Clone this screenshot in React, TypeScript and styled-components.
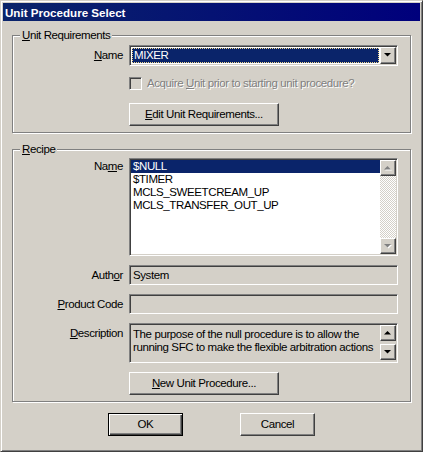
import React from "react";
import styled, { createGlobalStyle, css } from "styled-components";

const GlobalStyle = createGlobalStyle`
  html, body {
    margin: 0;
    padding: 0;
    background: #d4d0c8;
  }
  body {
    font-family: "Liberation Sans", Arial, sans-serif;
    font-size: 11.5px;
    letter-spacing: -0.4px;
    line-height: 13px;
    color: #000;
  }
`;

// win2000 3d borders
const sunken = css`
  box-sizing: border-box;
  border: 1px solid;
  border-color: #808080 #ffffff #ffffff #808080;
  box-shadow: inset 1px 1px 0 #404040, inset -1px -1px 0 #d4d0c8;
  padding: 1px;
`;

const raised = css`
  box-sizing: border-box;
  border: 1px solid;
  border-color: #ffffff #404040 #404040 #ffffff;
  box-shadow: inset -1px -1px 0 #808080, inset 1px 1px 0 #d4d0c8;
  background: #d4d0c8;
`;

const Window = styled.div`
  width: 423px;
  height: 452px;
  box-sizing: border-box;
  border: 1px solid;
  border-color: #d4d0c8 #404040 #404040 #d4d0c8;
  box-shadow: inset 1px 1px 0 #ffffff, inset -1px -1px 0 #808080;
  padding: 2px;
  background: #d4d0c8;
  display: flex;
  flex-direction: column;
`;

const TitleBar = styled.div`
  height: 18px;
  flex: none;
  display: flex;
  align-items: center;
  padding-left: 2px;
  background: linear-gradient(90deg, #0a246a, #00007c);
  color: #fff;
  font: bold 11.6px "Liberation Sans", Arial, sans-serif;
  letter-spacing: 0;
`;

const Body = styled.div`
  display: flex;
  flex-direction: column;
  padding: 0 9px;
`;

const GroupBox = styled.div<{ $top: number; $bottom: number }>`
  margin-top: ${(p) => p.$top}px;
  border: 1px solid #808080;
  box-shadow: inset 1px 1px 0 #ffffff, 1px 1px 0 #ffffff;
  padding: 0 12px ${(p) => p.$bottom}px 1px;
  display: flex;
  flex-direction: column;
`;

const Legend = styled.div`
  align-self: flex-start;
  margin: -7px 0 0 6px;
  padding: 0 2px;
  height: 13px;
  background: #d4d0c8;
`;

const Row = styled.div<{ $gap: number; $align?: string }>`
  display: grid;
  grid-template-columns: 109px 269px;
  column-gap: 6px;
  align-items: ${(p) => p.$align || "center"};
  margin-top: ${(p) => p.$gap}px;
`;

const Label = styled.div<{ $pad?: number }>`
  text-align: right;
  white-space: nowrap;
  padding-top: ${(p) => p.$pad || 0}px;
`;

const Combo = styled.div`
  ${sunken};
  height: 21px;
  background: #fff;
  display: flex;
`;

const ComboValue = styled.div`
  flex: 1;
  margin: 1px;
  padding-left: 1px;
  background: #0a246a;
  color: #fff;
  border: 1px dotted #f0d78c;
  display: flex;
  align-items: center;
`;

const ArrowButton = styled.div<{ $h?: number }>`
  ${raised};
  width: 16px;
  height: ${(p) => p.$h || 16}px;
  flex: none;
  display: flex;
  align-items: center;
  justify-content: center;
`;

const CheckRow = styled.div`
  display: flex;
  align-items: center;
  gap: 5px;
  white-space: nowrap;
`;

const CheckBox = styled.div`
  ${sunken};
  width: 13px;
  height: 13px;
  background: #d4d0c8;
`;

const Disabled = styled.span`
  color: #808080;
  text-shadow: 1px 1px 0 #ffffff;
`;

const Button = styled.button<{ $width: number; $default?: boolean }>`
  ${raised};
  width: ${(p) => p.$width}px;
  height: 23px;
  padding: 0;
  font: inherit;
  letter-spacing: inherit;
  color: #000;
  text-align: center;
  ${(p) =>
    p.$default &&
    css`
      border: 1px solid #000;
      box-shadow: inset 1px 1px 0 #ffffff, inset -1px -1px 0 #404040,
        inset -2px -2px 0 #808080;
    `}
`;

const ListBox = styled.div`
  ${sunken};
  height: 98px;
  background: #fff;
  display: flex;
`;

const ListItems = styled.div`
  flex: 1;
  display: flex;
  flex-direction: column;
`;

const ListItem = styled.div<{ $selected?: boolean }>`
  height: 13px;
  padding-left: 2px;
  white-space: nowrap;
  background: ${(p) => (p.$selected ? "#0a246a" : "transparent")};
  color: ${(p) => (p.$selected ? "#fff" : "#000")};
`;

const ScrollBar = styled.div`
  width: 16px;
  display: flex;
  flex-direction: column;
`;

const Track = styled.div`
  flex: 1;
  background: repeating-conic-gradient(#ffffff 0 25%, #d4d0c8 0 50%) 0 0 / 2px 2px;
`;

const Field = styled.div<{ $h: number }>`
  ${sunken};
  height: ${(p) => p.$h}px;
  background: #d4d0c8;
  padding: 3px 1px 1px 3px;
  white-space: nowrap;
`;

const MemoField = styled(Field)`
  display: flex;
  padding-top: 1px;
`;

const MemoText = styled.div`
  flex: 1;
  padding-top: 3px;
  line-height: 13px;
  overflow: hidden;
`;

const Spin = styled.div`
  display: flex;
  flex-direction: column;
  justify-content: space-between;
  padding-bottom: 1px;
`;

const ButtonBar = styled.div`
  display: flex;
  justify-content: center;
  gap: 57px;
  margin-top: 11px;
`;

const Arrow = ({ up, disabled }: { up?: boolean; disabled?: boolean }) => {
  const d = up ? "M3.5 0 L0 3.5 L7 3.5 Z" : "M0 0 L7 0 L3.5 3.5 Z";
  return (
    <svg width="8" height="5" viewBox="0 0 8 5" style={{ display: "block" }}>
      {disabled && <path d={d} fill="#ffffff" transform="translate(1 1)" />}
      <path d={d} fill={disabled ? "#808080" : "#000000"} />
    </svg>
  );
};

const recipes = ["$NULL", "$TIMER", "MCLS_SWEETCREAM_UP", "MCLS_TRANSFER_OUT_UP"];

const App = () => {
  return (
    <>
      <GlobalStyle />
      <Window>
        <TitleBar>Unit Procedure Select</TitleBar>
        <Body>
          <GroupBox $top={14} $bottom={6}>
            <Legend>
              <u>U</u>nit Requirements
            </Legend>
            <Row $gap={3}>
              <Label>
                <u>N</u>ame
              </Label>
              <Combo>
                <ComboValue>MIXER</ComboValue>
                <ArrowButton $h={17}>
                  <Arrow />
                </ArrowButton>
              </Combo>
            </Row>
            <Row $gap={11}>
              <div />
              <CheckRow>
                <CheckBox />
                <Disabled>
                  Acquire <u>U</u>nit prior to starting unit procedure?
                </Disabled>
              </CheckRow>
            </Row>
            <Row $gap={13}>
              <div />
              <Button $width={150}>
                <u>E</u>dit Unit Requirements...
              </Button>
            </Row>
          </GroupBox>

          <GroupBox $top={16} $bottom={6}>
            <Legend>
              <u>R</u>ecipe
            </Legend>
            <Row $gap={2} $align="start">
              <Label $pad={2}>
                Na<u>m</u>e
              </Label>
              <ListBox>
                <ListItems>
                  {recipes.map((r, i) => (
                    <ListItem key={r} $selected={i === 0}>
                      {r}
                    </ListItem>
                  ))}
                </ListItems>
                <ScrollBar>
                  <ArrowButton>
                    <Arrow up disabled />
                  </ArrowButton>
                  <Track />
                  <ArrowButton>
                    <Arrow disabled />
                  </ArrowButton>
                </ScrollBar>
              </ListBox>
            </Row>
            <Row $gap={9}>
              <Label>
                Auth<u>o</u>r
              </Label>
              <Field $h={20}>System</Field>
            </Row>
            <Row $gap={9}>
              <Label>
                <u>P</u>roduct Code
              </Label>
              <Field $h={20} />
            </Row>
            <Row $gap={9} $align="start">
              <Label $pad={4}>
                <u>D</u>escription
              </Label>
              <MemoField $h={40}>
                <MemoText>
                  The purpose of the null procedure is to allow the
                  <br />
                  running SFC to make the flexible arbitration actions
                </MemoText>
                <Spin>
                  <ArrowButton>
                    <Arrow up />
                  </ArrowButton>
                  <ArrowButton>
                    <Arrow />
                  </ArrowButton>
                </Spin>
              </MemoField>
            </Row>
            <Row $gap={9}>
              <div />
              <Button $width={150}>
                <u>N</u>ew Unit Procedure...
              </Button>
            </Row>
          </GroupBox>

          <ButtonBar>
            <Button $width={75} $default>
              OK
            </Button>
            <Button $width={75}>Cancel</Button>
          </ButtonBar>
        </Body>
      </Window>
    </>
  );
};

export default App;
